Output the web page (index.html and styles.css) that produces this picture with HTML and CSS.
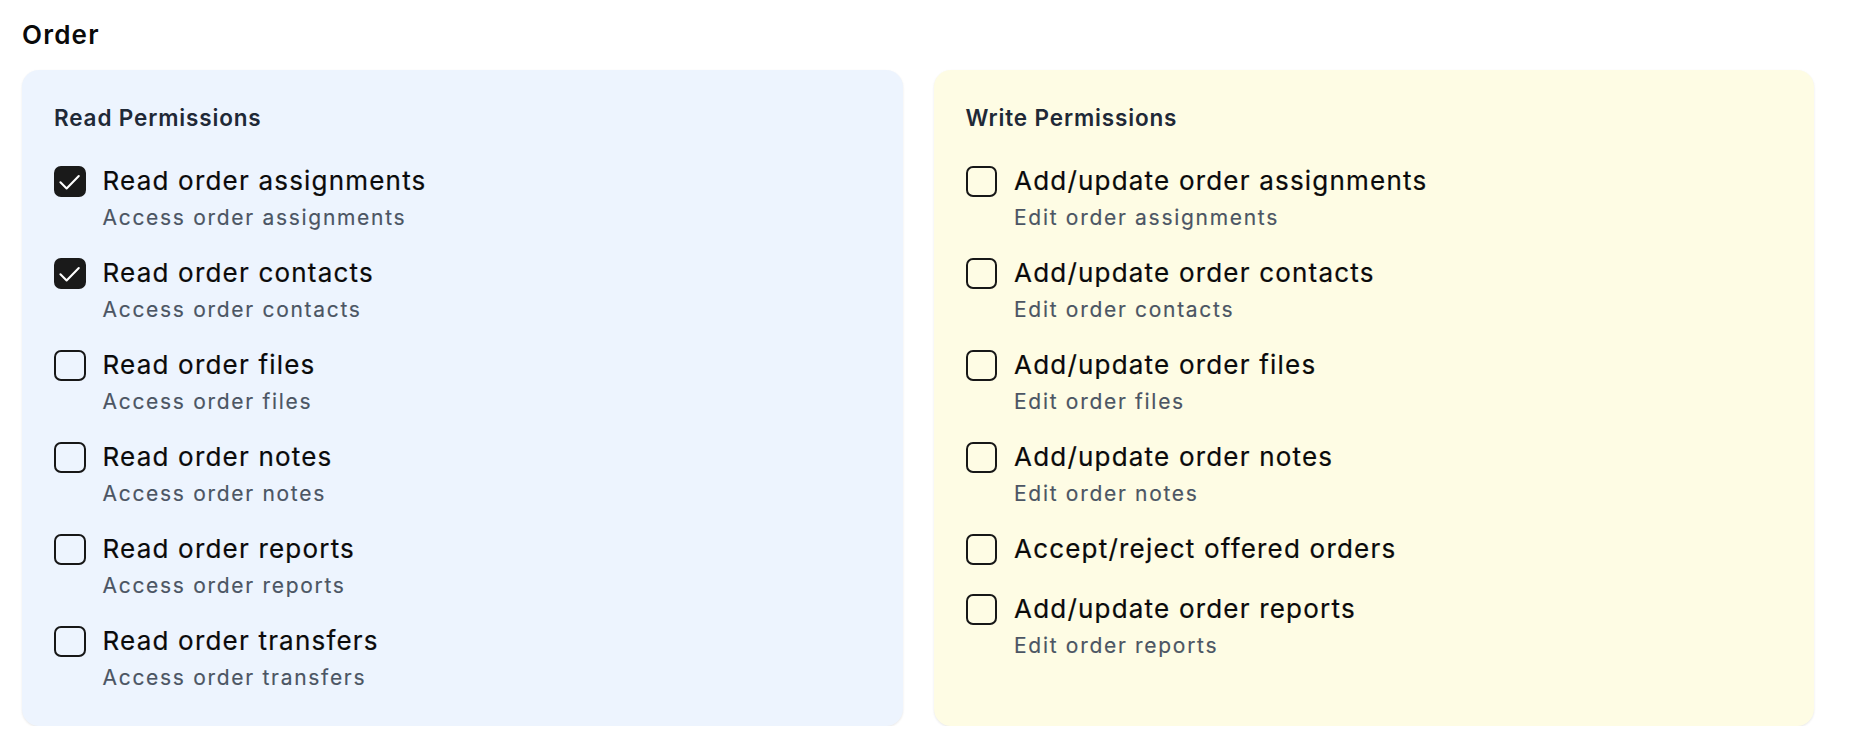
FILE: index.html
```html
<!DOCTYPE html>
<html lang="en">
<head>
<meta charset="utf-8">
<title>Order permissions</title>
<link rel="stylesheet" href="styles.css">
</head>
<body>
<main class="page">
  <h1 class="page-title">Order</h1>
  <div class="grid">
    <section class="card card-read">
      <h2 class="card-title">Read Permissions</h2>
      <ul class="list">
        <li class="item">
          <span class="box checked"><svg viewBox="0 0 28 28" class="tick"><polyline points="4.5,14.5 10.8,20.8 23.2,8.2"/></svg></span>
          <div class="text"><div class="name">Read order assignments</div><div class="desc">Access order assignments</div></div>
        </li>
        <li class="item">
          <span class="box checked"><svg viewBox="0 0 28 28" class="tick"><polyline points="4.5,14.5 10.8,20.8 23.2,8.2"/></svg></span>
          <div class="text"><div class="name">Read order contacts</div><div class="desc">Access order contacts</div></div>
        </li>
        <li class="item">
          <span class="box"></span>
          <div class="text"><div class="name">Read order files</div><div class="desc">Access order files</div></div>
        </li>
        <li class="item">
          <span class="box"></span>
          <div class="text"><div class="name">Read order notes</div><div class="desc">Access order notes</div></div>
        </li>
        <li class="item">
          <span class="box"></span>
          <div class="text"><div class="name">Read order reports</div><div class="desc">Access order reports</div></div>
        </li>
        <li class="item">
          <span class="box"></span>
          <div class="text"><div class="name">Read order transfers</div><div class="desc">Access order transfers</div></div>
        </li>
      </ul>
    </section>
    <section class="card card-write">
      <h2 class="card-title">Write Permissions</h2>
      <ul class="list">
        <li class="item">
          <span class="box"></span>
          <div class="text"><div class="name">Add/update order assignments</div><div class="desc">Edit order assignments</div></div>
        </li>
        <li class="item">
          <span class="box"></span>
          <div class="text"><div class="name">Add/update order contacts</div><div class="desc">Edit order contacts</div></div>
        </li>
        <li class="item">
          <span class="box"></span>
          <div class="text"><div class="name">Add/update order files</div><div class="desc">Edit order files</div></div>
        </li>
        <li class="item">
          <span class="box"></span>
          <div class="text"><div class="name">Add/update order notes</div><div class="desc">Edit order notes</div></div>
        </li>
        <li class="item">
          <span class="box"></span>
          <div class="text"><div class="name">Accept/reject offered orders</div></div>
        </li>
        <li class="item">
          <span class="box"></span>
          <div class="text"><div class="name">Add/update order reports</div><div class="desc">Edit order reports</div></div>
        </li>
      </ul>
    </section>
  </div>
</main>
</body>
</html>
```
FILE: styles.css
```css
* { box-sizing: border-box; }
html, body { margin: 0; padding: 0; background: #ffffff; }
body {
  font-family: Inter, "Noto Sans", "Liberation Sans", sans-serif;
  color: #0a0a0a;
}
.page {
  padding: 15px 42px 0 22px;
}
.page-title {
  margin: 0 0 16px 0;
  font-size: 26px;
  line-height: 39px;
  font-weight: 600;
  letter-spacing: 1.2px;
  color: #0a0a0a;
}
.grid {
  display: grid;
  grid-template-columns: 1fr 1fr;
  gap: 31px;
}
.card {
  border-radius: 17px;
  padding: 30px 32px 32px 32px;
  box-shadow: 0 1px 3px rgba(0, 0, 0, 0.06), 0 1px 2px rgba(0, 0, 0, 0.04);
}
.card-read { background: #edf4fe; }
.card-write { background: #fefce4; }
.card-title {
  margin: 0 0 24px 0;
  font-size: 22.5px;
  line-height: 35px;
  font-weight: 600;
  letter-spacing: 0.85px;
  color: #1f2937;
}
.list {
  list-style: none;
  margin: 0;
  padding: 0;
  display: flex;
  flex-direction: column;
  gap: 17px;
}
.item {
  display: flex;
  align-items: flex-start;
  gap: 17px;
}
.box {
  flex: 0 0 auto;
  width: 31.5px;
  height: 31.5px;
  margin-top: 6.8px;
  border: 2px solid #171717;
  border-radius: 7px;
  background: transparent;
  display: flex;
  align-items: center;
  justify-content: center;
}
.box.checked {
  background: #1a1a1a;
  border-color: #1a1a1a;
}
.tick {
  width: 100%;
  height: 100%;
  fill: none;
  stroke: #ffffff;
  stroke-width: 2.1;
  stroke-linecap: round;
  stroke-linejoin: round;
}
.name {
  font-size: 26px;
  line-height: 43px;
  letter-spacing: 1.2px;
  color: #0a0a0a;
  -webkit-text-stroke: 0.2px #0a0a0a;
}
.desc {
  font-size: 21px;
  line-height: 32px;
  letter-spacing: 1.7px;
  color: #4b5563;
  -webkit-text-stroke: 0.15px #4b5563;
}
```
